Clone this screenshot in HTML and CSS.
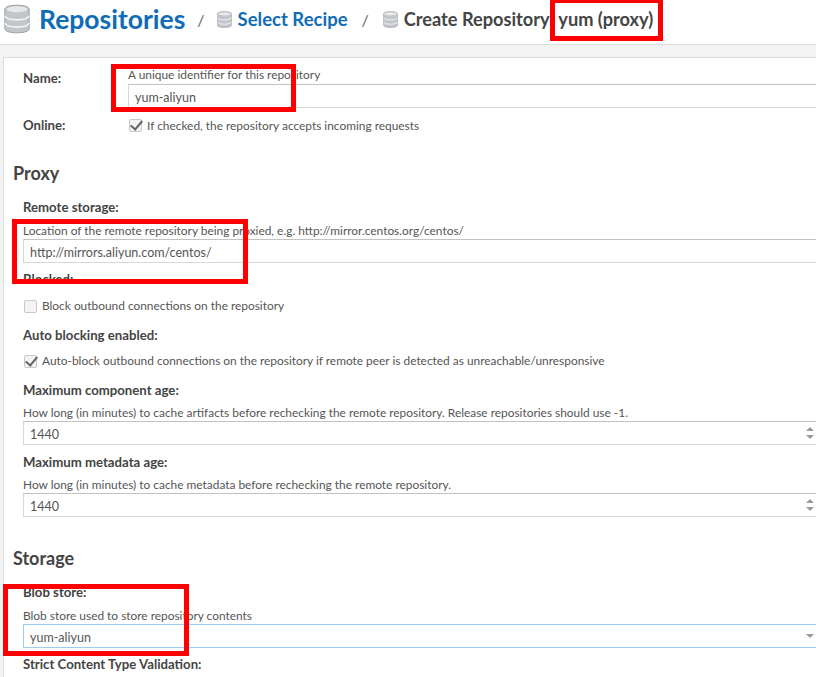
FILE: index.html
```html
<!DOCTYPE html>
<html lang="en">
<head>
    <meta charset="UTF-8">
    <title>Create Repository</title>
    <link rel="stylesheet" href="styles.css">
</head>
<body>
    <svg class="defs" width="0" height="0">
        <symbol id="db" viewBox="0 0 32 36">
            <path d="M1 6c0-3 6-5 15-5s15 2 15 5v24c0 3-6 5-15 5S1 33 1 30z" fill="#c2c6ca" stroke="#8f9498"/>
            <ellipse cx="16" cy="6" rx="13" ry="3.6" fill="#e6e8ea"/>
            <path d="M1 14c1 3 7 5 15 5s14-2 15-5M1 23c1 3 7 5 15 5s14-2 15-5" fill="none" stroke="#f2f3f4" stroke-width="2"/>
        </symbol>
    </svg>

    <header class="breadcrumb">
        <svg class="icon-big"><use href="#db"/></svg>
        <a class="crumb-root">Repositories</a>
        <span class="sep">/</span>
        <svg class="icon-small"><use href="#db"/></svg>
        <a class="crumb-link">Select Recipe</a>
        <span class="sep sep-second">/</span>
        <svg class="icon-small"><use href="#db"/></svg>
        <span class="crumb-current">Create Repository: yum (proxy)</span>
    </header>

    <main class="panel">
        <div class="row row-name">
            <label class="label label-side">Name:</label>
            <div class="grow">
                <div class="help help-name">A unique identifier for this repository</div>
                <div class="input">yum-aliyun</div>
            </div>
        </div>
        <div class="row row-online">
            <label class="label label-side">Online:</label>
            <span class="check checked"></span>
            <span class="help">If checked, the repository accepts incoming requests</span>
        </div>

        <h2 class="section section-proxy">Proxy</h2>

        <div class="field">
            <label class="label">Remote storage:</label>
            <div class="help">Location of the remote repository being proxied, e.g. http://mirror.centos.org/centos/</div>
            <div class="input">http://mirrors.aliyun.com/centos/</div>
        </div>
        <div class="field field-check">
            <label class="label">Blocked:</label>
            <div class="check-line">
                <span class="check"></span>
                <span class="help">Block outbound connections on the repository</span>
            </div>
        </div>
        <div class="field field-check field-auto">
            <label class="label">Auto blocking enabled:</label>
            <div class="check-line">
                <span class="check checked"></span>
                <span class="help">Auto-block outbound connections on the repository if remote peer is detected as unreachable/unresponsive</span>
            </div>
        </div>
        <div class="field field-component">
            <label class="label">Maximum component age:</label>
            <div class="help">How long (in minutes) to cache artifacts before rechecking the remote repository. Release repositories should use -1.</div>
            <div class="input input-number">1440</div>
        </div>
        <div class="field field-metadata">
            <label class="label">Maximum metadata age:</label>
            <div class="help">How long (in minutes) to cache metadata before rechecking the remote repository.</div>
            <div class="input input-number">1440</div>
        </div>

        <h2 class="section section-storage">Storage</h2>

        <div class="field">
            <label class="label">Blob store:</label>
            <div class="help">Blob store used to store repository contents</div>
            <div class="input input-select">yum-aliyun</div>
        </div>
        <div class="field">
            <label class="label">Strict Content Type Validation:</label>
        </div>
    </main>

    <!-- red boxes drawn over the screenshot -->
    <div class="mark mark-name"></div>
    <div class="mark mark-title"></div>
    <div class="mark mark-remote"></div>
    <div class="mark mark-blob"></div>
</body>
</html>
```

FILE: styles.css
```css
html, body {
    height: 100%;
}

body {
    margin: 0;
    overflow: hidden;
    position: relative;
    font-family: "Lato", "Liberation Sans", sans-serif;
    background-color: #f3f3f3;
    color: #444;
}

.defs {
    position: absolute;
}

.breadcrumb {
    box-sizing: content-box;
    display: flex;
    align-items: center;
    height: 38px;
    padding: 0 0 6px 4px;
    background-color: #fff;
    border-bottom: 1px solid #ddd;
    white-space: nowrap;
}

.icon-big {
    width: 26px;
    height: 30px;
    margin-right: 9px;
}

.icon-small {
    width: 15px;
    height: 17px;
    margin-right: 6px;
}

.crumb-root {
    color: #0f6cb6;
    font-size: 26.5px;
    font-weight: 700;
}

.crumb-link {
    color: #0f6cb6;
    font-size: 18.5px;
    font-weight: 700;
}

.crumb-current {
    color: #444;
    font-size: 18.2px;
    font-weight: 700;
}

.sep {
    color: #666;
    font-size: 16px;
    margin: 0 12px;
}

.sep-second {
    margin: 0 14px;
}

.panel {
    box-sizing: border-box;
    margin: 12px -20px 0 3px;
    padding: 0 0 20px 19px;
    height: 640px;
    overflow: hidden;
    background-color: #fff;
    border: 1px solid #ddd;
}

.row {
    display: flex;
    align-items: center;
}

.row-name {
    align-items: flex-start;
    padding-top: 10px;
}

.row-online {
    margin-top: 10px;
}

.row-online .check {
    margin-left: 1px;
}

.label-side {
    width: 105px;
    flex: none;
}

.row-name .label-side {
    padding-top: 3px;
}

.grow {
    flex: 1;
}

.label {
    display: block;
    font-size: 13.2px;
    font-weight: 700;
    line-height: 15px;
    color: #444;
}

.help {
    font-size: 11.9px;
    line-height: 14px;
    color: #555;
    white-space: nowrap;
}

.input {
    position: relative;
    box-sizing: border-box;
    height: 24px;
    line-height: 25px;
    margin-top: 2px;
    padding-left: 6px;
    font-size: 12.5px;
    color: #555;
    background-color: #fff;
    border: 1px solid #d8d8d8;
    border-top-color: #c2c2c2;
}

.input-number::before,
.input-number::after,
.input-select::after {
    content: "";
    position: absolute;
    right: 20px;
    border-left: 4px solid transparent;
    border-right: 4px solid transparent;
}

.input-number::before {
    top: 5px;
    border-bottom: 4px solid #999;
}

.input-number::after {
    top: 13px;
    border-top: 4px solid #999;
}

.input-select {
    border-color: #9ecbee;
}

.input-select::after {
    top: 9px;
    border-top: 4px solid #999;
}

.check {
    box-sizing: border-box;
    display: block;
    flex: none;
    position: relative;
    width: 13px;
    height: 13px;
    margin-right: 5px;
    background-color: #f4f4f4;
    border: 1px solid #c8c8c8;
    border-radius: 2px;
}

.checked::after {
    content: "";
    position: absolute;
    left: 3px;
    top: -2px;
    width: 5px;
    height: 10px;
    border-right: 2px solid #666;
    border-bottom: 2px solid #666;
    transform: rotate(40deg);
}

.check-line {
    display: flex;
    align-items: center;
    margin-top: 12px;
    margin-left: 1px;
}

.field-auto .check-line {
    margin-top: 11px;
}

.section {
    margin: 0;
    margin-left: -10px;
    font-size: 18px;
    font-weight: 700;
    line-height: 20px;
    color: #444;
}

.section-proxy {
    margin-top: 30px;
}

.section-storage {
    margin-top: 31px;
}

.field {
    margin-top: 9px;
}

.field-auto {
    margin-top: 15px;
}

.field-component {
    margin-top: 15px;
}

.field-metadata {
    margin-top: 10px;
}

.section + .field {
    margin-top: 17px;
}

.field .help {
    margin-top: 9px;
}

.field-component .help,
.field-metadata .help {
    margin-top: 8px;
}

.field .input {
    margin-top: 1px;
}

.field-check .help,
.row .help {
    margin-top: 0;
}

.mark {
    position: absolute;
    box-sizing: border-box;
    border: 5px solid #f00;
}

.mark-name {
    left: 111px;
    top: 64px;
    width: 185px;
    height: 48px;
}

.mark-title {
    left: 550px;
    top: -2px;
    width: 113px;
    height: 43px;
}

.mark-remote {
    left: 12px;
    top: 219px;
    width: 236px;
    height: 65px;
}

.mark-blob {
    left: 3px;
    top: 584px;
    width: 186px;
    height: 72px;
}
```
